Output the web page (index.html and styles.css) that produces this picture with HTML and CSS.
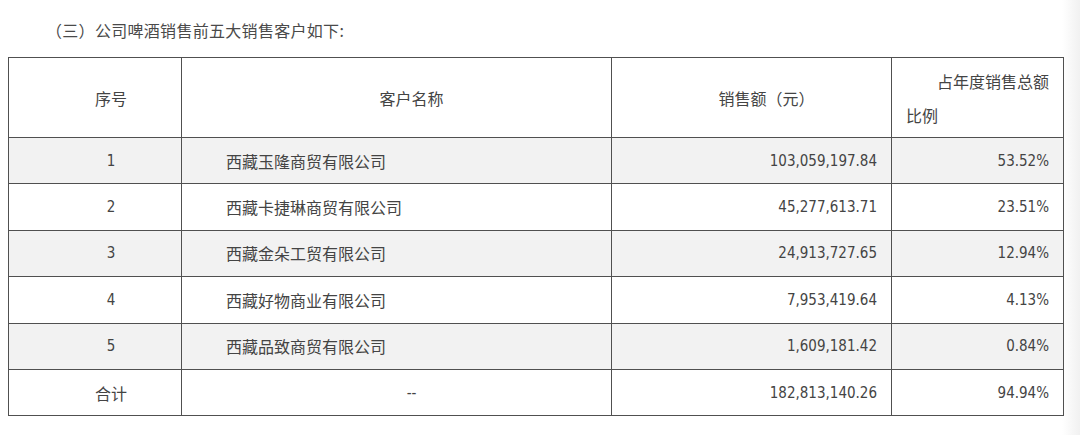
FILE: index.html
```html
<!DOCTYPE html>
<html lang="zh-CN">
<head>
<meta charset="utf-8">
<title>公司啤酒销售前五大销售客户</title>
<link rel="stylesheet" href="styles.css">
</head>
<body>
<div class="page">
  <p class="title">（三）公司啤酒销售前五大销售客户如下:</p>
  <table class="sales">
    <colgroup>
      <col class="c-idx">
      <col class="c-name">
      <col class="c-amt">
      <col class="c-pct">
    </colgroup>
    <thead>
      <tr class="head">
        <th class="idx">序号</th>
        <th class="name-h">客户名称</th>
        <th class="amt-h">销售额（元）</th>
        <th class="pct-h"><span class="l1">占年度销售总额</span><span class="l2">比例</span></th>
      </tr>
    </thead>
    <tbody>
      <tr class="shade">
        <td class="idx num">1</td>
        <td class="name">西藏玉隆商贸有限公司</td>
        <td class="amt num">103,059,197.84</td>
        <td class="pct num">53.52%</td>
      </tr>
      <tr>
        <td class="idx num">2</td>
        <td class="name">西藏卡捷琳商贸有限公司</td>
        <td class="amt num">45,277,613.71</td>
        <td class="pct num">23.51%</td>
      </tr>
      <tr class="shade">
        <td class="idx num">3</td>
        <td class="name">西藏金朵工贸有限公司</td>
        <td class="amt num">24,913,727.65</td>
        <td class="pct num">12.94%</td>
      </tr>
      <tr>
        <td class="idx num">4</td>
        <td class="name">西藏好物商业有限公司</td>
        <td class="amt num">7,953,419.64</td>
        <td class="pct num">4.13%</td>
      </tr>
      <tr class="shade">
        <td class="idx num">5</td>
        <td class="name">西藏品致商贸有限公司</td>
        <td class="amt num">1,609,181.42</td>
        <td class="pct num">0.84%</td>
      </tr>
      <tr>
        <td class="idx">合计</td>
        <td class="dash num">--</td>
        <td class="amt num">182,813,140.26</td>
        <td class="pct num">94.94%</td>
      </tr>
    </tbody>
  </table>
</div>
</body>
</html>
```
FILE: styles.css
```css
html, body {
  margin: 0;
  padding: 0;
}

body {
  width: 1080px;
  height: 435px;
  overflow: hidden;
  background: linear-gradient(to right, #ffffff 0, #ffffff 1062px, #f1f1f1 1080px);
  font-family: "Noto Sans CJK SC", "Noto Sans", sans-serif;
  color: #444444;
}

.page {
  padding: 0 0 0 8px;
}

.title {
  margin: 0;
  padding: 19px 0 0 38px;
  height: 57px;
  box-sizing: border-box;
  font-size: 16px;
  line-height: 22px;
  letter-spacing: 0.3px;
  color: #4a4a4a;
}

.sales {
  border-collapse: collapse;
  width: 1055px;
  table-layout: fixed;
  font-size: 16px;
}

.c-idx { width: 173px; }
.c-name { width: 430px; }
.c-amt { width: 280px; }
.c-pct { width: 172px; }

.sales th,
.sales td {
  border: 1px solid #505050;
  padding: 0;
  font-weight: normal;
  color: #444444;
  vertical-align: middle;
}

.head th {
  height: 79px;
}

.sales tbody td {
  height: 45.4px;
}

.shade td {
  background: #f2f2f2;
}

.num {
  font-family: "DejaVu Sans Condensed", "DejaVu Sans", sans-serif;
  font-size: 15px;
}

.idx {
  text-align: center;
  padding-left: 32px !important;
}

.name-h {
  text-align: center;
  padding-left: 30px !important;
}

.name {
  text-align: left;
  padding-left: 44px !important;
}

.dash {
  text-align: center;
  padding-left: 30px !important;
}

.amt-h {
  text-align: center;
  padding-left: 30px !important;
}

.amt {
  text-align: right;
  padding-right: 14px !important;
}

.pct {
  text-align: right;
  padding-right: 14px !important;
}

.pct-h {
  padding: 0 14px !important;
}

.pct-h .l1 {
  display: block;
  text-align: right;
  line-height: 34px;
}

.pct-h .l2 {
  display: block;
  text-align: left;
  line-height: 34px;
}
```
